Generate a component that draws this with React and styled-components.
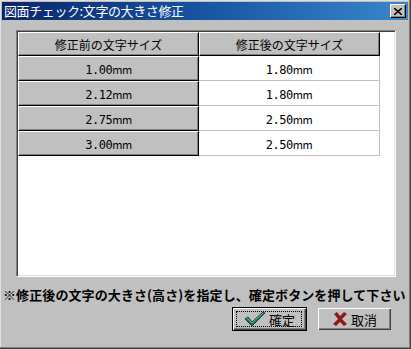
import React from "react";
import styled, { createGlobalStyle } from "styled-components";

const GlobalStyle = createGlobalStyle`
  html, body {
    margin: 0;
    padding: 0;
    background: #c0c0c0;
  }
  * { box-sizing: border-box; }
`;

const JP = `"Noto Sans CJK JP", "Noto Sans", sans-serif`;

const Window = styled.div`
  width: 411px;
  height: 349px;
  background: #c0c0c0;
  padding: 2px 0 0 2px;
  border-right: 1px solid #404040;
  border-bottom: 1px solid #404040;
  box-shadow: inset -1px -1px 0 #808080, inset 1px 1px 0 #dfdfdf;
  display: flex;
  flex-direction: column;
  font-family: ${JP};
`;

const TitleBar = styled.div`
  height: 18px;
  margin-right: 2px;
  background: linear-gradient(90deg, #0a246a 0%, #1a5aa8 55%, #3a86cc 100%);
  display: flex;
  align-items: center;
  justify-content: space-between;
  padding: 0 2px 0 2px;
`;

const Title = styled.span`
  color: #fff;
  font-size: 13px;
  line-height: 18px;
  letter-spacing: -0.4px;
`;

const CloseBox = styled.div`
  width: 16px;
  height: 14px;
  background: #c0c0c0;
  border-top: 1px solid #fff;
  border-left: 1px solid #fff;
  border-right: 1px solid #000;
  border-bottom: 1px solid #000;
  box-shadow: inset -1px -1px 0 #808080;
  display: flex;
  align-items: center;
  justify-content: center;
`;

const Grid = styled.div`
  margin: 10px 0 0 14px;
  width: 380px;
  height: 247px;
  background: #fff;
  border-top: 1px solid #808080;
  border-left: 1px solid #808080;
  border-right: 1px solid #fff;
  border-bottom: 1px solid #fff;
  box-shadow: inset 1px 1px 0 #404040, inset -1px -1px 0 #dfdfdf;
  padding: 1px 0 0 1px;
`;

const Row = styled.div`
  display: flex;
  height: ${(p) => (p.$head ? 24 : 25)}px;
`;

const FixedCell = styled.div`
  width: 181px;
  height: 100%;
  background: #c0c0c0;
  border-top: 1px solid #fff;
  border-left: 1px solid #fff;
  border-right: 1px solid #000;
  border-bottom: 1px solid #000;
  box-shadow: inset -1px -1px 0 #808080;
  display: flex;
  align-items: center;
  justify-content: center;
  font-size: 12px;
  color: #000;
`;

const ValueCell = styled.div`
  width: 181px;
  height: 100%;
  background: #fff;
  border-right: 1px solid #c0c0c0;
  border-bottom: 1px solid #c0c0c0;
  display: flex;
  align-items: center;
  justify-content: center;
  font-size: 12px;
  color: #000;
`;

const Num = styled.span`
  font-family: "DejaVu Sans Mono", monospace;
  font-size: 12px;
  letter-spacing: -0.5px;
`;

const Unit = styled.span`
  font-family: ${JP};
  font-size: 11px;
  letter-spacing: -0.5px;
`;

const Note = styled.div`
  margin: 10px 0 0 1px;
  font-size: 13px;
  font-weight: bold;
  line-height: 16px;
  white-space: nowrap;
  letter-spacing: 0.1px;
  color: #000;
`;

const ButtonRow = styled.div`
  display: flex;
  gap: 10px;
  margin: 4px 0 0 230px;
`;

const Button = styled.div`
  width: 75px;
  height: 24px;
  background: #c0c0c0;
  border: 1px solid ${(p) => (p.$default ? "#000" : "transparent")};
  box-shadow: inset 1px 1px 0 #fff, inset -1px -1px 0 #404040,
    inset -2px -2px 0 #808080;
  display: flex;
  align-items: center;
  justify-content: center;
  position: relative;
  font-size: 13px;
  gap: 3px;
  color: #000;
`;

const Focus = styled.div`
  position: absolute;
  inset: 3px 4px 3px 3px;
  border: 1px dotted #000;
`;

const rows = [
  ["1.00", "1.80"],
  ["2.12", "1.80"],
  ["2.75", "2.50"],
  ["3.00", "2.50"],
];

const Size = ({ v }) => (
  <span>
    <Num>{v}</Num>
    <Unit>mm</Unit>
  </span>
);

const CheckIcon = () => (
  <svg width="22" height="18" viewBox="0 0 22 18">
    <path d="M1 9 L4 7 L8 12 L19 2 L21 3 L8 16 Z" fill="#1f7a2e" stroke="#0d3a7a" strokeWidth="1" />
    <path d="M3 8 L8 13 L19 3" fill="none" stroke="#5fbf5f" strokeWidth="1" />
  </svg>
);

const CrossIcon = () => (
  <svg width="16" height="16" viewBox="0 0 16 16">
    <path d="M2 3 L5 1 L8 5 L12 1 L15 3 L10 8 L15 13 L12 15 L8 11 L4 15 L1 13 L6 8 Z" fill="#8b1a1a" />
  </svg>
);

export default function App() {
  return (
    <>
      <GlobalStyle />
      <Window>
        <TitleBar>
          <Title>図面チェック:文字の大きさ修正</Title>
          <CloseBox>
            <svg width="8" height="7" viewBox="0 0 8 7">
              <path d="M0 0 L8 7 M8 0 L0 7" stroke="#000" strokeWidth="1.6" />
            </svg>
          </CloseBox>
        </TitleBar>
        <Grid>
          <Row $head>
            <FixedCell>修正前の文字サイズ</FixedCell>
            <FixedCell>修正後の文字サイズ</FixedCell>
          </Row>
          {rows.map(([a, b]) => (
            <Row key={a}>
              <FixedCell>
                <Size v={a} />
              </FixedCell>
              <ValueCell>
                <Size v={b} />
              </ValueCell>
            </Row>
          ))}
        </Grid>
        <Note>※修正後の文字の大きさ(高さ)を指定し、確定ボタンを押して下さい</Note>
        <ButtonRow>
          <Button $default>
            <Focus />
            <CheckIcon />
            確定
          </Button>
          <Button>
            <CrossIcon />
            取消
          </Button>
        </ButtonRow>
      </Window>
    </>
  );
}
